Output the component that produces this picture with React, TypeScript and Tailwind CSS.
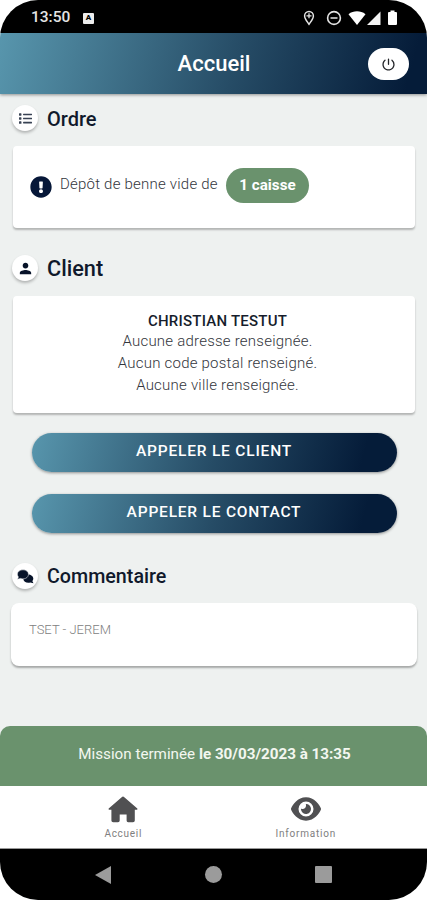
import type { ReactNode } from 'react';
import { FaExclamationCircle, FaList } from 'react-icons/fa';
import { FaEye } from 'react-icons/fa6';
import { IoPower } from 'react-icons/io5';
import { MdPerson } from 'react-icons/md';

type SectionTitleProps = {
  icon: ReactNode;
  children: ReactNode;
};

const Icon = {
  home: (
    <svg width="30" height="27" viewBox="0 0 30 27" fill="currentColor">
      <path d="M13.700 1.200Q15 0 16.300 1.200L29.300 12.600Q30 13.500 28.900 13.800H26.800V24.500Q26.800 26.200 25 26.200H20.200Q18.600 26.200 18.600 24.500V18.600H11.700V24.500Q11.700 26.200 10 26.200H5.200Q3.400 26.200 3.400 24.500V13.800H1.100Q0 13.500 .7 12.600Z" />
    </svg>
  ),
  comments: (
    <svg width="17" height="15" viewBox="0 0 17 15">
      <path
        d="M11 5.500C14 5.500 16.300 7.200 16.300 9.600C16.300 10.700 15.800 11.600 15.400 12.200L16.500 14.200L13.200 13.500C9.500 14.300 6.500 12.600 6.300 10Z"
        fill="#071329"
      />
      <path
        d="M6 .8C9.200.8 11.500 2.700 11.500 5.300S9.200 9.900 6 9.900C5.100 9.900 4.300 9.700 3.600 9.400L.5 10.200L1.400 7.900C.8 7.200.4 6.300.4 5.300C.4 2.700 2.800.8 6 .8Z"
        fill="#071329"
        stroke="#fff"
        strokeWidth=".5"
      />
    </svg>
  ),
};

function StatusBar() {
  return (
    <div className="flex h-[33px] shrink-0 items-center bg-black pt-[3px] pr-[29px] pl-[31px] text-[#e4e4e4]">
      <span className="w-[52px] text-[15.500px] leading-none font-medium">
        13:50
      </span>
      <span className="flex h-[11px] w-[11px] items-center justify-center rounded-[1px] bg-[#ededed] text-[8px] leading-none font-black text-black">
        A
      </span>

      <div className="ml-auto flex items-center">
        {/* LOCATION */}
        <svg width="12" height="16" viewBox="0 0 12 16" fill="none">
          <path
            d="M6 14.2C4 11.3 1.6 8.6 1.6 5.9a4.4 4.4 0 0 1 8.8 0C10.4 8.6 8 11.3 6 14.2Z"
            stroke="currentColor"
            strokeWidth="1.5"
          />
          <path d="M6 3.3v5M3.5 5.8h5" stroke="currentColor" strokeWidth="1.3" />
        </svg>

        {/* DO NOT DISTURB */}
        <svg
          className="ml-[11px]"
          width="16"
          height="16"
          viewBox="0 0 16 16"
          fill="none"
          stroke="currentColor"
          strokeWidth="1.6"
        >
          <circle cx="8" cy="8" r="6.4" />
          <path d="M4.500 8h7" />
        </svg>

        {/* WIFI */}
        <svg className="ml-[6px]" width="18" height="16" viewBox="0 0 18 16">
          <path d="M.5 4.2C5.400 .4 12.600 .4 17.500 4.200L9 15Z" fill="#fff" />
        </svg>

        {/* SIGNAL */}
        <svg className="ml-px" width="14" height="16" viewBox="0 0 14 16">
          <path d="M13.500 1.500V15H0Z" fill="#f4f4f4" />
        </svg>

        {/* BATTERY */}
        <svg className="ml-[6px]" width="11" height="16" viewBox="0 0 11 16">
          <path
            d="M3.500 .5h4v1.500h1.500q1 0 1 1v11q0 1-1 1h-7q-1 0-1-1V3q0-1 1-1h1.500Z"
            fill="#fff"
          />
        </svg>
      </div>
    </div>
  );
}

function Header() {
  return (
    <header className="relative flex h-[61px] shrink-0 items-center justify-center bg-linear-[105deg] from-[#5896ad] via-[#264c66] via-55% to-[#051c39] to-95% shadow-[0_1px_3px_rgba(0,0,0,0.4)]">
      <h1 className="-mt-px ml-px text-[22px] font-medium text-white">
        Accueil
      </h1>
      <button
        title="Déconnexion"
        className="absolute top-[15px] right-[18px] flex h-8 w-[41px] items-center justify-center rounded-full bg-white text-[15px] text-[#222428]"
      >
        <IoPower />
      </button>
    </header>
  );
}

function SectionTitle({ icon, children }: SectionTitleProps) {
  return (
    <div className="flex h-7 items-center">
      <span className="flex h-[26px] w-[26px] items-center justify-center rounded-full bg-white text-[#071329] shadow-[0_2px_3px_rgba(0,0,0,0.25)]">
        {icon}
      </span>
      <h2 className="mt-px ml-[9px] leading-7 font-medium text-[#10192b]">
        {children}
      </h2>
    </div>
  );
}

function CallButton({ children }: { children: ReactNode }) {
  return (
    <button className="h-[39px] w-[365px] rounded-full bg-linear-[105deg] from-[#5896ad] via-[#264c66] via-50% to-[#051c39] to-90% pb-px text-[15.500px] font-medium tracking-[0.8px] text-white shadow-[0_1px_3px_rgba(0,0,0,0.4)]">
      {children}
    </button>
  );
}

function TabBar() {
  return (
    <nav className="flex h-[63px] shrink-0 border-b border-[#999] bg-white pr-[30px] pl-[32px] text-[#505052]">
      <div className="flex flex-1 flex-col items-center pt-[10px]">
        <span className="h-[30px]">{Icon.home}</span>
        <span className="mt-[2px] text-[10px] leading-3 tracking-[0.7px] text-[#808080]">
          Accueil
        </span>
      </div>
      <div className="flex flex-1 flex-col items-center pt-[8px]">
        <FaEye size={30} />
        <span className="mt-[4px] text-[10px] leading-3 tracking-[0.8px] text-[#808080]">
          Information
        </span>
      </div>
    </nav>
  );
}

function AndroidNav() {
  return (
    <div className="flex h-[51px] shrink-0 items-center justify-between bg-black pr-[95px] pl-[94px] text-[#9b9b9b]">
      <svg width="18" height="18" viewBox="0 0 18 18" fill="currentColor">
        <path d="M17 0v18L1 9Z" />
      </svg>
      <span className="h-[17px] w-[17px] rounded-full bg-current" />
      <span className="h-[17px] w-[17px] rounded-[1px] bg-current" />
    </div>
  );
}

export default function App() {
  return (
    <div className="h-[900px] w-[427px] bg-white">
      <div className="flex h-full flex-col overflow-hidden rounded-[38px] bg-[#eef1f0] font-[Roboto,sans-serif]">
        <StatusBar />
        <Header />

        <main className="flex flex-1 flex-col pt-[10px] pr-[11px] pl-3">
          <div className="text-[20px]">
            <SectionTitle icon={<FaList size={13} className="opacity-80" />}>
              Ordre
            </SectionTitle>
          </div>
          <div className="mx-px mt-[14px] flex h-[82px] items-center rounded-[4px] bg-white pl-[17px] shadow-[0_2px_2px_rgba(0,0,0,0.25)]">
            <FaExclamationCircle size={22} className="text-[#061738]" />
            <span className="-mt-[5px] ml-[8px] w-[158px] text-[15px] font-light tracking-[0.22px] whitespace-nowrap text-[#33363c]">
              Dépôt de benne vide de
            </span>
            <span className="-mt-[4px] ml-[8px] flex h-[35px] w-[83px] items-center justify-center rounded-full bg-[#6a926d] text-[15.200px] font-bold text-white">
              1 caisse
            </span>
          </div>

          <div className="mt-[26px] text-[21.700px]">
            <SectionTitle icon={<MdPerson size={17} />}>Client</SectionTitle>
          </div>
          <div className="mx-px mt-[14px] h-[117px] rounded-[4px] bg-white pt-[14px] pl-[7px] text-center text-[15px] leading-[22px] font-light tracking-[0.23px] text-[#33363c] shadow-[0_2px_2px_rgba(0,0,0,0.25)]">
            <p className="h-[20px] font-medium text-[#161d2c]">
              CHRISTIAN TESTUT
            </p>
            <p>Aucune adresse renseignée.</p>
            <p>Aucun code postal renseigné.</p>
            <p>Aucune ville renseignée.</p>
          </div>

          <div className="mt-5 flex flex-col items-center gap-[22px]">
            <CallButton>APPELER LE CLIENT</CallButton>
            <CallButton>APPELER LE CONTACT</CallButton>
          </div>

          <div className="mt-[29px] text-[19.700px]">
            <SectionTitle icon={Icon.comments}>Commentaire</SectionTitle>
          </div>
          <div className="-mx-px mt-[13px] h-[63px] rounded-[8px] bg-white px-[18px] pt-[17px] text-[13px] leading-5 font-light text-[#808080] shadow-[0_2px_2px_rgba(0,0,0,0.3)]">
            TSET - JEREM
          </div>
        </main>

        <div className="flex h-[60px] shrink-0 items-center justify-center rounded-t-[10px] bg-[#6a926d] pb-[3px] pl-[2px] text-[15.200px] text-[#f3f7f0]">
          <p>
            Mission terminée <b>le 30/03/2023 à 13:35</b>
          </p>
        </div>
        <TabBar />
        <AndroidNav />
      </div>
    </div>
  );
}
